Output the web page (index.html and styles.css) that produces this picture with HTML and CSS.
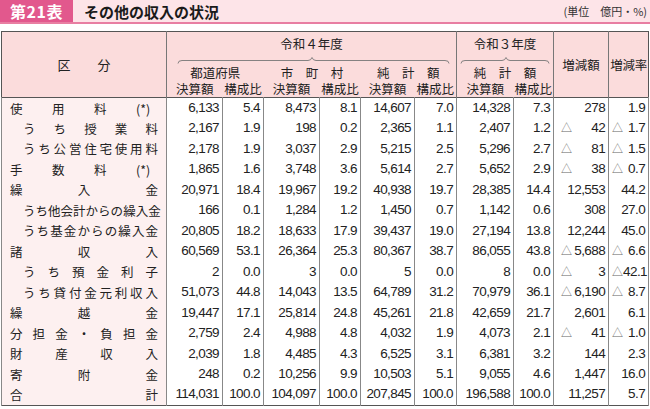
FILE: index.html
```html
<!DOCTYPE html>
<html lang="ja">
<head>
<meta charset="utf-8">
<title>第21表 その他の収入の状況</title>
<link rel="stylesheet" href="styles.css">
</head>
<body>
<div class="title-bar">
  <div class="badge">第21表</div>
  <div class="title">その他の収入の状況</div>
  <div class="unit">(単位　億円・%)</div>
</div>
<table class="tbl">
  <colgroup>
    <col class="w-lbl"><col class="w56"><col class="w41"><col class="w56"><col class="w41"><col class="w54"><col class="w42"><col class="w57"><col class="w40"><col class="w55"><col class="w40">
  </colgroup>
  <thead>
    <tr class="h-a">
      <th rowspan="4" class="br"><div class="kubun"><span>区</span><span>分</span></div></th>
      <th colspan="6" class="br">令和４年度</th>
      <th colspan="2" class="br">令和３年度</th>
      <th rowspan="4" class="br">増減額</th>
      <th rowspan="4" class="narrow">増減率</th>
    </tr>
    <tr class="h-b">
      <th colspan="6" class="br"><svg class="brace" width="290" height="8" viewBox="0 0 290 8"><path d="M11 7.5 Q11 4.5 15 4.5 H141 Q144 4.5 145 1.5 Q146 4.5 149 4.5 H278 Q282 4.5 282 7.5"/></svg></th>
      <th colspan="2" class="br"><svg class="brace" width="97" height="8" viewBox="0 0 97 8"><path d="M4 7.5 Q4 4.5 8 4.5 H45 Q48 4.5 49 1.5 Q50 4.5 53 4.5 H88 Q92 4.5 92 7.5"/></svg></th>
    </tr>
    <tr class="h-c">
      <th colspan="2">都道府県</th>
      <th colspan="2">市　町　村</th>
      <th colspan="2" class="br">純　計　額</th>
      <th colspan="2" class="br">純　計　額</th>
    </tr>
    <tr class="h-d">
      <th>決算額</th><th>構成比</th>
      <th>決算額</th><th>構成比</th>
      <th>決算額</th><th class="br">構成比</th>
      <th>決算額</th><th class="br">構成比</th>
    </tr>
  </thead>
  <tbody>
    <tr><td class="lbl"><div class="dist"><span>使</span><span>用</span><span>料</span><span class="ast">(*)</span></div></td>
      <td>6,133</td><td>5.4</td><td>8,473</td><td>8.1</td><td>14,607</td><td>7.0</td><td>14,328</td><td>7.3</td><td>278</td><td>1.9</td></tr>
    <tr><td class="lbl sub"><div class="dist"><span>う</span><span>ち</span><span>授</span><span>業</span><span>料</span></div></td>
      <td>2,167</td><td>1.9</td><td>198</td><td>0.2</td><td>2,365</td><td>1.1</td><td>2,407</td><td>1.2</td><td class="neg amt"><div class="tri"><span class="t">△</span><span>42</span></div></td><td class="neg rate"><div class="tri"><span class="t">△</span><span>1.7</span></div></td></tr>
    <tr><td class="lbl sub"><div class="dist"><span>う</span><span>ち</span><span>公</span><span>営</span><span>住</span><span>宅</span><span>使</span><span>用</span><span>料</span></div></td>
      <td>2,178</td><td>1.9</td><td>3,037</td><td>2.9</td><td>5,215</td><td>2.5</td><td>5,296</td><td>2.7</td><td class="neg amt"><div class="tri"><span class="t">△</span><span>81</span></div></td><td class="neg rate"><div class="tri"><span class="t">△</span><span>1.5</span></div></td></tr>
    <tr><td class="lbl"><div class="dist"><span>手</span><span>数</span><span>料</span><span class="ast">(*)</span></div></td>
      <td>1,865</td><td>1.6</td><td>3,748</td><td>3.6</td><td>5,614</td><td>2.7</td><td>5,652</td><td>2.9</td><td class="neg amt"><div class="tri"><span class="t">△</span><span>38</span></div></td><td class="neg rate"><div class="tri"><span class="t">△</span><span>0.7</span></div></td></tr>
    <tr><td class="lbl"><div class="dist"><span>繰</span><span>入</span><span>金</span></div></td>
      <td>20,971</td><td>18.4</td><td>19,967</td><td>19.2</td><td>40,938</td><td>19.7</td><td>28,385</td><td>14.4</td><td>12,553</td><td>44.2</td></tr>
    <tr><td class="lbl sub"><div class="dist"><span>う</span><span>ち</span><span>他</span><span>会</span><span>計</span><span>か</span><span>ら</span><span>の</span><span>繰</span><span>入</span><span>金</span></div></td>
      <td>166</td><td>0.1</td><td>1,284</td><td>1.2</td><td>1,450</td><td>0.7</td><td>1,142</td><td>0.6</td><td>308</td><td>27.0</td></tr>
    <tr><td class="lbl sub"><div class="dist"><span>う</span><span>ち</span><span>基</span><span>金</span><span>か</span><span>ら</span><span>の</span><span>繰</span><span>入</span><span>金</span></div></td>
      <td>20,805</td><td>18.2</td><td>18,633</td><td>17.9</td><td>39,437</td><td>19.0</td><td>27,194</td><td>13.8</td><td>12,244</td><td>45.0</td></tr>
    <tr><td class="lbl"><div class="dist"><span>諸</span><span>収</span><span>入</span></div></td>
      <td>60,569</td><td>53.1</td><td>26,364</td><td>25.3</td><td>80,367</td><td>38.7</td><td>86,055</td><td>43.8</td><td class="neg amt"><div class="tri"><span class="t">△</span><span>5,688</span></div></td><td class="neg rate"><div class="tri"><span class="t">△</span><span>6.6</span></div></td></tr>
    <tr><td class="lbl sub"><div class="dist"><span>う</span><span>ち</span><span>預</span><span>金</span><span>利</span><span>子</span></div></td>
      <td>2</td><td>0.0</td><td>3</td><td>0.0</td><td>5</td><td>0.0</td><td>8</td><td>0.0</td><td class="neg amt"><div class="tri"><span class="t">△</span><span>3</span></div></td><td class="neg rate"><div class="tri"><span class="t">△</span><span>42.1</span></div></td></tr>
    <tr><td class="lbl sub"><div class="dist"><span>う</span><span>ち</span><span>貸</span><span>付</span><span>金</span><span>元</span><span>利</span><span>収</span><span>入</span></div></td>
      <td>51,073</td><td>44.8</td><td>14,043</td><td>13.5</td><td>64,789</td><td>31.2</td><td>70,979</td><td>36.1</td><td class="neg amt"><div class="tri"><span class="t">△</span><span>6,190</span></div></td><td class="neg rate"><div class="tri"><span class="t">△</span><span>8.7</span></div></td></tr>
    <tr><td class="lbl"><div class="dist"><span>繰</span><span>越</span><span>金</span></div></td>
      <td>19,447</td><td>17.1</td><td>25,814</td><td>24.8</td><td>45,261</td><td>21.8</td><td>42,659</td><td>21.7</td><td>2,601</td><td>6.1</td></tr>
    <tr><td class="lbl"><div class="dist"><span>分</span><span>担</span><span>金</span><span>・</span><span>負</span><span>担</span><span>金</span></div></td>
      <td>2,759</td><td>2.4</td><td>4,988</td><td>4.8</td><td>4,032</td><td>1.9</td><td>4,073</td><td>2.1</td><td class="neg amt"><div class="tri"><span class="t">△</span><span>41</span></div></td><td class="neg rate"><div class="tri"><span class="t">△</span><span>1.0</span></div></td></tr>
    <tr><td class="lbl"><div class="dist"><span>財</span><span>産</span><span>収</span><span>入</span></div></td>
      <td>2,039</td><td>1.8</td><td>4,485</td><td>4.3</td><td>6,525</td><td>3.1</td><td>6,381</td><td>3.2</td><td>144</td><td>2.3</td></tr>
    <tr><td class="lbl"><div class="dist"><span>寄</span><span>附</span><span>金</span></div></td>
      <td>248</td><td>0.2</td><td>10,256</td><td>9.9</td><td>10,503</td><td>5.1</td><td>9,055</td><td>4.6</td><td>1,447</td><td>16.0</td></tr>
    <tr><td class="lbl"><div class="dist"><span>合</span><span>計</span></div></td>
      <td>114,031</td><td>100.0</td><td>104,097</td><td>100.0</td><td>207,845</td><td>100.0</td><td>196,588</td><td>100.0</td><td>11,257</td><td>5.7</td></tr>
  </tbody>
</table>
</body>
</html>
```
FILE: styles.css
```css
html, body {
  margin: 0;
  padding: 0;
  background: #fff;
}
body {
  width: 650px;
  height: 409px;
  overflow: hidden;
  font-family: "Noto Sans CJK JP", sans-serif;
  color: #222;
}
.title-bar {
  display: flex;
  align-items: center;
  height: 22px;
  background: #fde4e8;
  border-bottom: 2px solid #e87ea2;
}
.badge {
  width: 73px;
  height: 100%;
  background: #e2588d;
  color: #fff;
  font-weight: bold;
  font-size: 16px;
  line-height: 22px;
  text-align: center;
  letter-spacing: 0.5px;
}
.title {
  margin-left: 11px;
  font-weight: bold;
  font-size: 15px;
  color: #1a1a1a;
}
.unit {
  margin-left: auto;
  margin-right: 3px;
  font-size: 11px;
  color: #333;
}
.tbl {
  margin: 7px 0 0 1px;
  border-collapse: collapse;
  table-layout: fixed;
  width: 647px;
  border: 1.5px solid #555;
}
.w-lbl { width: 165px; }
.w56 { width: 56px; }
.w41 { width: 41px; }
.w54 { width: 54px; }
.w42 { width: 42px; }
.w57 { width: 57px; }
.w40 { width: 40px; }
.w55 { width: 55px; }
th {
  background: #fbdcdc;
  font-weight: normal;
  font-size: 12.5px;
  line-height: 1.2;
  padding: 0;
  color: #222;
  white-space: nowrap;
}
th.narrow { letter-spacing: -0.3px; }
th.br { border-right: 1px solid #777; }
.h-a { height: 24px; }
.h-b { height: 7px; }
.h-c { height: 17px; }
.h-d { height: 17px; }
.h-b th { vertical-align: bottom; line-height: 0; }
.brace { display: block; }
.brace path {
  fill: none;
  stroke: #777;
  stroke-width: 0.9;
}
.kubun {
  display: flex;
  justify-content: center;
  gap: 27px;
  font-size: 13px;
}
tbody tr { height: 20.5px; }
tbody tr:first-child td { border-top: 1.5px solid #555; }
td {
  padding: 0 3px 0 0;
  border-left: 1px solid #888;
  border-right: 1px solid #888;
  text-align: right;
  font-family: "Liberation Sans", Arial, sans-serif;
  font-size: 13.5px;
  letter-spacing: -0.6px;
  color: #222;
  white-space: nowrap;
  line-height: 1.2;
}
td.lbl {
  background: #fdf0f0;
  font-family: "Noto Sans CJK JP", sans-serif;
  font-size: 12.5px;
  letter-spacing: 0;
  padding: 0 8px 0 8px;
  text-align: left;
}
td.lbl.sub { padding: 0 8px 0 21px; }
.dist {
  display: flex;
  justify-content: space-between;
}
.ast {
  width: 22px;
  display: flex;
  justify-content: space-between;
  letter-spacing: 0;
}
td.neg.amt { padding: 0 3px 0 7px; }
td.neg.rate { padding: 0 3px 0 3px; }
.tri {
  display: flex;
  justify-content: space-between;
  align-items: baseline;
}
.tri .t {
  font-family: "Noto Sans CJK JP", sans-serif;
  font-size: 11px;
  letter-spacing: 0;
  color: #666;
}
```
